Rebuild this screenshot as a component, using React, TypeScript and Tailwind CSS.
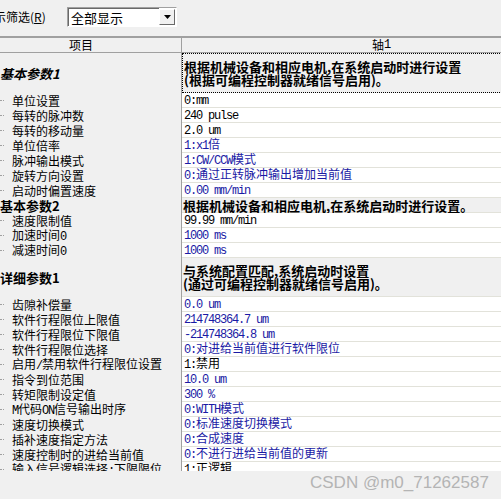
type Row =
  | { kind: "section"; label: string; lines: string[]; h: string; italic?: boolean; focus?: boolean }
  | { kind: "item"; label: string; value: string; blue?: boolean };

const ROWS: Row[] = [
  {
    kind: "section",
    label: "基本参数1",
    italic: true,
    focus: true,
    h: "h-[40px]",
    lines: ["根据机械设备和相应电机,在系统启动时进行设置", "(根据可编程控制器就绪信号启用)。"],
  },
  { kind: "item", label: "单位设置", value: "0:mm" },
  { kind: "item", label: "每转的脉冲数", value: "240 pulse" },
  { kind: "item", label: "每转的移动量", value: "2.0 um" },
  { kind: "item", label: "单位倍率", value: "1:x1倍", blue: true },
  { kind: "item", label: "脉冲输出模式", value: "1:CW/CCW模式", blue: true },
  { kind: "item", label: "旋转方向设置", value: "0:通过正转脉冲输出增加当前值", blue: true },
  { kind: "item", label: "启动时偏置速度", value: "0.00 mm/min", blue: true },
  {
    kind: "section",
    label: "基本参数2",
    h: "h-[15px]",
    lines: ["根据机械设备和相应电机,在系统启动时进行设置。"],
  },
  { kind: "item", label: "速度限制值", value: "99.99 mm/min" },
  { kind: "item", label: "加速时间0", value: "1000 ms", blue: true },
  { kind: "item", label: "减速时间0", value: "1000 ms", blue: true },
  {
    kind: "section",
    label: "详细参数1",
    h: "h-[39px]",
    lines: ["与系统配置匹配,系统启动时设置", "(通过可编程控制器就绪信号启用)。"],
  },
  { kind: "item", label: "齿隙补偿量", value: "0.0 um", blue: true },
  { kind: "item", label: "软件行程限位上限值", value: "214748364.7 um", blue: true },
  { kind: "item", label: "软件行程限位下限值", value: "-214748364.8 um", blue: true },
  { kind: "item", label: "软件行程限位选择", value: "0:对进给当前值进行软件限位", blue: true },
  { kind: "item", label: "启用/禁用软件行程限位设置", value: "1:禁用" },
  { kind: "item", label: "指令到位范围", value: "10.0 um", blue: true },
  { kind: "item", label: "转矩限制设定值", value: "300 %", blue: true },
  { kind: "item", label: "M代码ON信号输出时序", value: "0:WITH模式", blue: true },
  { kind: "item", label: "速度切换模式", value: "0:标准速度切换模式", blue: true },
  { kind: "item", label: "插补速度指定方法", value: "0:合成速度", blue: true },
  { kind: "item", label: "速度控制时的进给当前值", value: "0:不进行进给当前值的更新", blue: true },
  { kind: "item", label: "输入信号逻辑选择:下限限位", value: "1:正逻辑" },
];

// ascii runs get the narrow mono face, like the old bitmap font
function Mixed({ text }: { text: string }) {
  const parts = text.split(/([\x20-\x7e]+)/).filter(Boolean);
  return (
    <>
      {parts.map((p, i) =>
        /^[\x20-\x7e]+$/.test(p) ? (
          <span key={i} className="whitespace-pre font-['Liberation_Mono',monospace] text-[12px] tracking-[-1.2px]">
            {p}
          </span>
        ) : (
          <span key={i}>{p}</span>
        )
      )}
    </>
  );
}

function TableRow({ row }: { row: Row }) {
  if (row.kind === "section") {
    return (
      <div className={`flex ${row.h}`}>
        <div className="flex w-[182px] shrink-0 items-center border-r border-[#a0a0a0]">
          <span className={`text-[13px] font-bold leading-none ${row.italic ? "italic" : ""}`}>
            {row.label}
          </span>
        </div>
        <div
          className={`flex w-[398px] shrink-0 flex-col justify-center bg-[#f0f0f0] pl-px text-[13px] font-bold leading-[13px] ${
            row.focus ? "border border-dotted border-black" : "border-b border-[#e2e2da]"
          }`}
        >
          {row.lines.map((l) => (
            <span key={l} className="whitespace-nowrap">
              {l}
            </span>
          ))}
        </div>
      </div>
    );
  }
  return (
    <div className="flex h-[15px]">
      <div className="relative flex w-[182px] shrink-0 items-center border-r border-[#a0a0a0] pl-[12px] text-[12px] leading-none">
        <span className="absolute left-0 top-[7px] w-[4px] border-t border-dotted border-[#a0a0a0]" />
        <span className="whitespace-nowrap">
          <Mixed text={row.label} />
        </span>
      </div>
      <div
        className={`flex w-[398px] shrink-0 items-center border-b border-[#e2e2da] bg-white pl-[2px] text-[12px] leading-none ${
          row.blue ? "text-[#1a1aa4]" : "text-black"
        }`}
      >
        <span className="whitespace-nowrap">
          <Mixed text={row.value} />
        </span>
      </div>
    </div>
  );
}

export default function App() {
  return (
    <div className="relative h-[499px] w-[501px] overflow-hidden bg-[#f0f0f0] font-['Noto_Sans_CJK_SC',sans-serif] text-black">
      {/* filter bar */}
      <div className="flex h-[36px] items-start pt-[7px]">
        <div className="-ml-[18px] flex h-[20px] w-[85px] shrink-0 items-center text-[12px]">
          显示筛选(<span className="underline">R</span>)
        </div>
        <div className="flex h-[20px] w-[110px] items-center border border-b-white border-l-[#a0a0a0] border-r-white border-t-[#a0a0a0] bg-white">
          <div className="flex h-full flex-1 items-center border-l border-t border-[#696969] pl-[2px] text-[13px]">
            全部显示
          </div>
          <div className="mr-px flex h-[16px] w-[16px] items-center justify-center border border-b-[#696969] border-l-white border-r-[#696969] border-t-white bg-[#f0f0f0]">
            <svg width="7" height="4" viewBox="0 0 7 4">
              <path d="M0 0h7L3.5 4z" fill="#000" />
            </svg>
          </div>
        </div>
      </div>

      {/* table */}
      <div className="h-[435px] overflow-hidden border-t-2 border-[#a0a0a0]">
        <div className="flex h-[15px] border-b border-[#a0a0a0] text-[12px] leading-none">
          <div className="flex w-[182px] shrink-0 items-center justify-center border-r border-[#a0a0a0] pr-[19px]">
            项目
          </div>
          <div className="flex w-[398px] shrink-0 items-center justify-center">
            <Mixed text="轴1" />
          </div>
        </div>
        {ROWS.map((r, i) => (
          <TableRow key={i} row={r} />
        ))}
      </div>

      <div className="absolute left-[310px] top-[470px] font-['Liberation_Sans',sans-serif] text-[17px] text-[#b4b4b4]">
        CSDN @m0_71262587
      </div>
    </div>
  );
}
